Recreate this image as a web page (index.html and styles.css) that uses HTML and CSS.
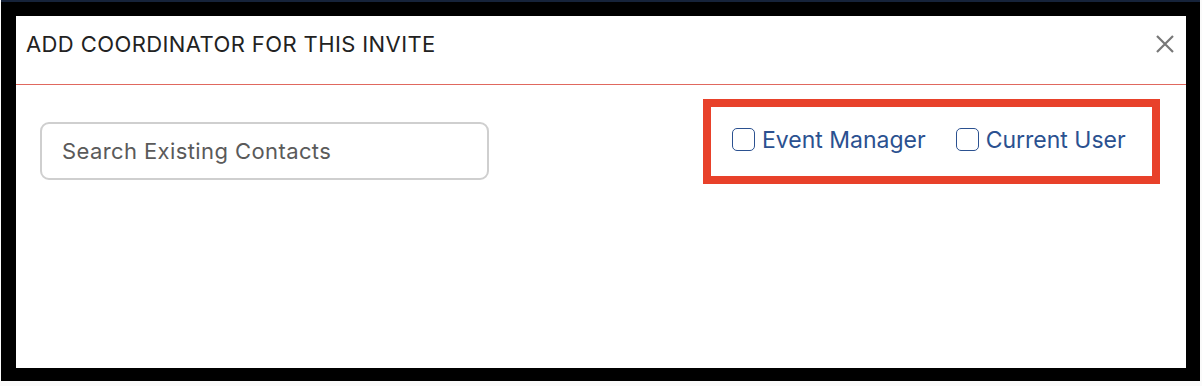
FILE: index.html
```html
<!DOCTYPE html>
<html>
<head>
<meta charset="utf-8">
<link rel="stylesheet" href="styles.css">
</head>
<body>
<div class="frame">
  <div class="modal">
    <div class="modal-header">
      <h1 class="title">ADD COORDINATOR FOR THIS INVITE</h1>
      <button class="close" aria-label="Close">
        <svg width="20" height="20" viewBox="0 0 20 20"><path d="M2 2 L18 18 M18 2 L2 18" stroke="#777" stroke-width="2.2" fill="none"/></svg>
      </button>
    </div>
    <div class="modal-body">
      <input class="search" type="text" placeholder="Search Existing Contacts">
      <div class="options">
        <label class="opt"><span class="box"></span>Event Manager</label>
        <label class="opt"><span class="box"></span>Current User</label>
      </div>
    </div>
  </div>
</div>
</body>
</html>
```
FILE: styles.css
```css
html, body {
  margin: 0;
  padding: 0;
  background: #fafafa;
}
body {
  font-family: Inter, "Noto Sans", sans-serif;
}
.frame {
  width: 1199px;
  height: 381px;
  margin-left: 1px;
  box-sizing: border-box;
  background: #000;
  border-top: 2px solid #16233a;
  padding: 14px 14px 15px 15px;
}
.modal {
  width: 1170px;
  height: 352px;
  background: #fff;
}
.modal-header {
  height: 69px;
  box-sizing: border-box;
  border-bottom: 1px solid #e0685e;
  display: flex;
  align-items: flex-start;
  justify-content: space-between;
  padding: 15px 11px 0 10px;
}
.title {
  margin: 0;
  font-size: 22px;
  font-weight: 400;
  letter-spacing: 0.4px;
  color: #222;
  line-height: 26px;
}
.close {
  border: 0;
  background: none;
  padding: 0;
  margin-top: 3px;
  width: 20px;
  height: 20px;
}
.close svg { display: block; }
.modal-body {
  display: flex;
  justify-content: space-between;
  align-items: flex-start;
  padding: 14px 26px 0 24px;
}
.search {
  margin-top: 23px;
  width: 449px;
  height: 58px;
  box-sizing: border-box;
  border: 2px solid #cfcfcf;
  border-radius: 9px;
  padding: 0 20px;
  font-family: Inter, "Noto Sans", sans-serif;
  font-size: 22px;
  letter-spacing: 0.4px;
  color: #555;
  outline: none;
}
.search::placeholder { color: #5a5a5a; }
.options {
  width: 457px;
  height: 85px;
  box-sizing: border-box;
  border: 8px solid #e8412a;
  display: flex;
  align-items: center;
  padding: 0 0 4px 21px;
  gap: 30px;
}
.opt {
  display: flex;
  align-items: center;
  font-size: 23px;
  color: #2b5190;
  gap: 7px;
}
.box {
  width: 21px;
  height: 21px;
  border: 1px solid #2b5190;
  border-radius: 5px;
  display: inline-block;
}
```
